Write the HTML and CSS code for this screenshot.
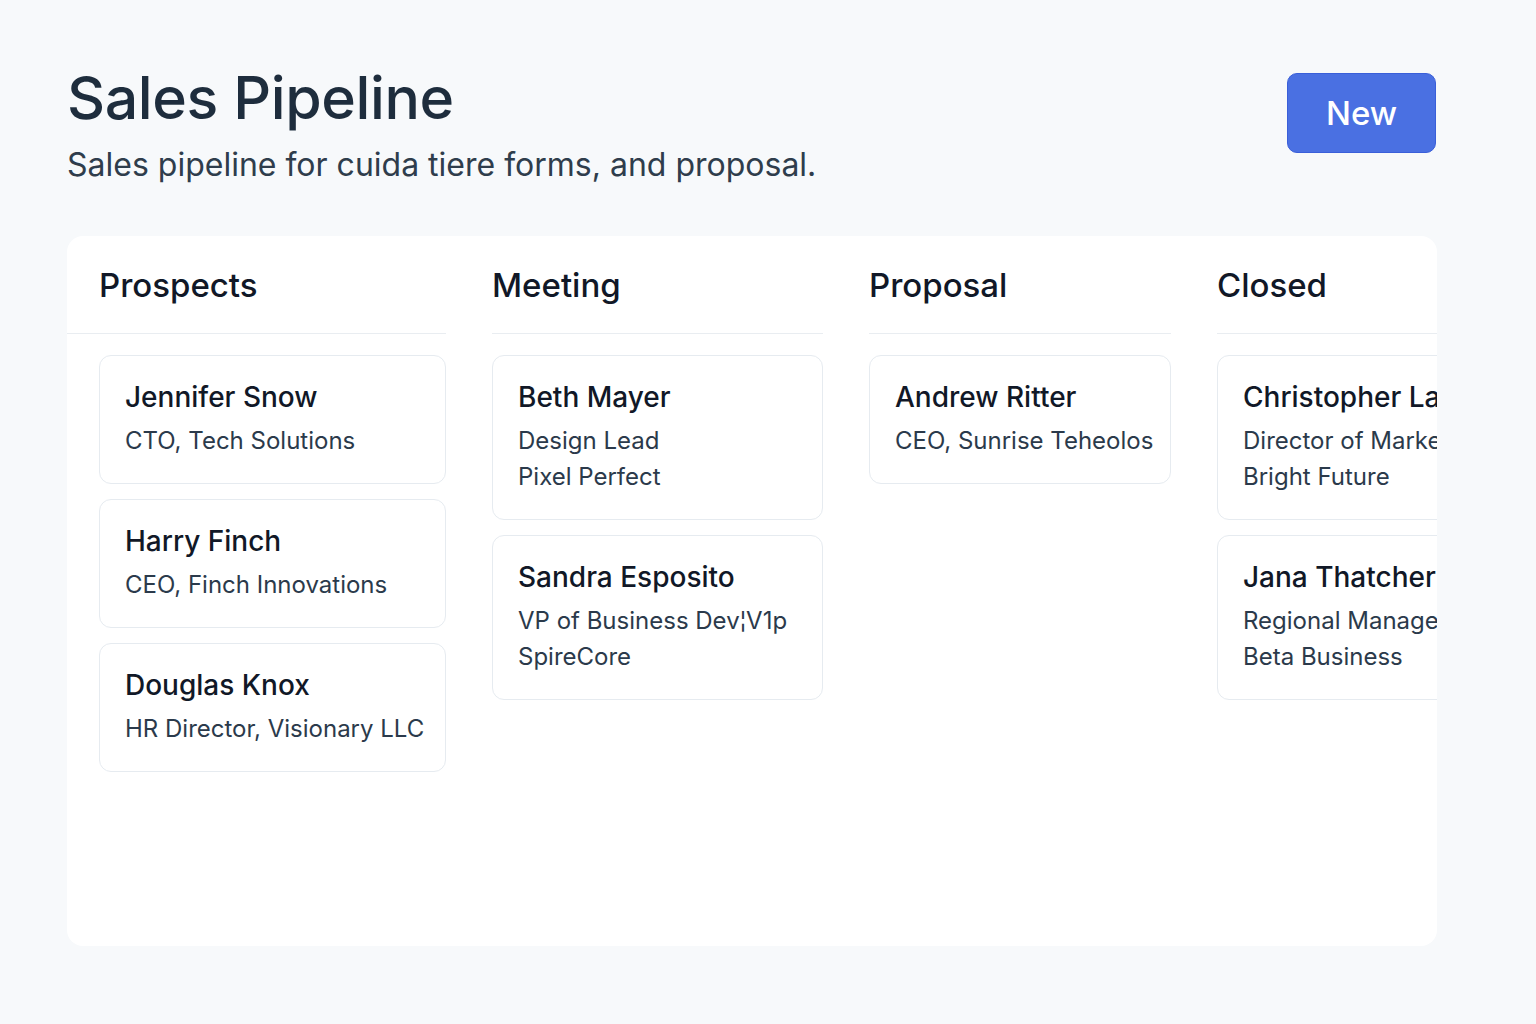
FILE: index.html
```html
<!DOCTYPE html>
<html lang="en">
<head>
<meta charset="utf-8">
<title>Sales Pipeline</title>
<link rel="stylesheet" href="styles.css">
</head>
<body>
<div class="page">
  <header class="top">
    <div class="heading">
      <h1 class="title">Sales Pipeline</h1>
      <p class="subtitle">Sales pipeline for cuida tiere forms, and proposal.</p>
    </div>
    <button class="btn-new">New</button>
  </header>

  <section class="board">
    <div class="column col-prospects">
      <h2 class="col-head">Prospects</h2>
      <div class="cards">
        <div class="card"><div class="name">Jennifer Snow</div><div class="sub">CTO, Tech Solutions</div></div>
        <div class="card"><div class="name">Harry Finch</div><div class="sub">CEO, Finch Innovations</div></div>
        <div class="card"><div class="name">Douglas Knox</div><div class="sub">HR Director, Visionary LLC</div></div>
      </div>
    </div>
    <div class="column col-meeting">
      <h2 class="col-head">Meeting</h2>
      <div class="cards">
        <div class="card"><div class="name">Beth Mayer</div><div class="sub">Design Lead</div><div class="sub">Pixel Perfect</div></div>
        <div class="card"><div class="name">Sandra Esposito</div><div class="sub">VP of Business Dev¦V1p</div><div class="sub">SpireCore</div></div>
      </div>
    </div>
    <div class="column col-proposal">
      <h2 class="col-head">Proposal</h2>
      <div class="cards">
        <div class="card"><div class="name">Andrew Ritter</div><div class="sub">CEO, Sunrise Teheolos</div></div>
      </div>
    </div>
    <div class="column col-closed">
      <h2 class="col-head">Closed</h2>
      <div class="cards">
        <div class="card"><div class="name">Christopher Lane</div><div class="sub">Director of Marketing</div><div class="sub">Bright Future</div></div>
        <div class="card"><div class="name">Jana Thatcher</div><div class="sub">Regional Manager</div><div class="sub">Beta Business</div></div>
      </div>
    </div>
  </section>
</div>
</body>
</html>
```

FILE: styles.css
```css
* { box-sizing: border-box; }
html, body { margin: 0; padding: 0; }
body {
  background: #f7f9fb;
  font-family: Inter, "Noto Sans", "Liberation Sans", sans-serif;
  color: #111827;
  width: 1536px;
  height: 1024px;
  overflow: hidden;
}
.page {
  padding: 60px 100px 0 67px;
}
.top {
  display: flex;
  justify-content: space-between;
  align-items: flex-start;
  height: 176px;
}
.title {
  margin: 0;
  font-size: 59px;
  font-weight: 500;
  line-height: 76px;
  color: #1e2d3d;
  letter-spacing: -0.4px;
}
.subtitle {
  margin: 9px 0 0;
  font-size: 32px;
  line-height: 40px;
  font-weight: 400;
  color: #2f3d4c;
}
.btn-new {
  margin-top: 13px;
  width: 149px;
  height: 80px;
  background: #4a70e2;
  border: 1.5px solid #3a5fd9;
  border-radius: 10px;
  color: #ffffff;
  font-family: inherit;
  font-size: 33px;
  font-weight: 500;
  padding: 0;
}
.board {
  width: 1370px;
  height: 710px;
  background: #ffffff;
  border-radius: 16px;
  padding: 0 0 0 32px;
  display: grid;
  grid-template-columns: 347px 331px 302px 340px;
  column-gap: 46px;
  align-items: start;
  overflow: hidden;
}
.col-head {
  margin: 0;
  padding: 28px 0 27px;
  font-size: 33px;
  line-height: 42px;
  font-weight: 500;
  color: #111827;
  border-bottom: 1px solid #e9edf1;
}
.col-prospects .col-head {
  margin-left: -32px;
  padding-left: 32px;
}
.cards {
  display: flex;
  flex-direction: column;
  gap: 15px;
  margin-top: 21px;
}
.card {
  border: 1px solid #e6ebf0;
  border-radius: 12px;
  padding: 23px 25px 24px;
  background: #ffffff;
  white-space: nowrap;
}
.name {
  font-size: 28px;
  line-height: 36px;
  font-weight: 500;
  color: #111827;
  margin-bottom: 8px;
}
.sub {
  font-size: 24px;
  line-height: 36px;
  color: #2b3a4b;
}
```
